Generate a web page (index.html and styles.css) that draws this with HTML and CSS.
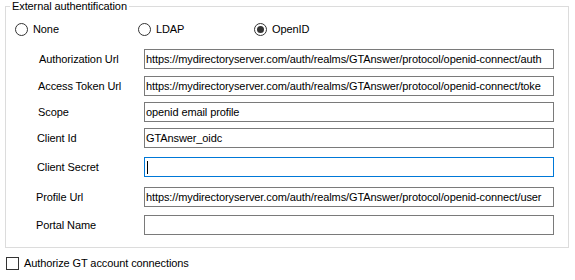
FILE: index.html
```html
<!DOCTYPE html>
<html>
<head>
<meta charset="utf-8">
<title>External authentification</title>
<link rel="stylesheet" href="styles.css">
</head>
<body>
<fieldset class="group">
  <legend class="group-title">External authentification</legend>
  <div class="radios">
    <label class="radio-opt"><span class="radio"></span><span>None</span></label>
    <label class="radio-opt"><span class="radio"></span><span>LDAP</span></label>
    <label class="radio-opt"><span class="radio radio--checked"></span><span>OpenID</span></label>
  </div>
  <div class="fields">
    <div class="field field--first">
      <span class="field-label lbl-39">Authorization Url</span>
      <div class="textbox">https://mydirectoryserver.com/auth/realms/GTAnswer/protocol/openid-connect/auth</div>
    </div>
    <div class="field sp-7">
      <span class="field-label lbl-38">Access Token Url</span>
      <div class="textbox">https://mydirectoryserver.com/auth/realms/GTAnswer/protocol/openid-connect/toke</div>
    </div>
    <div class="field sp-6">
      <span class="field-label lbl-38">Scope</span>
      <div class="textbox">openid email profile</div>
    </div>
    <div class="field sp-6">
      <span class="field-label lbl-37">Client Id</span>
      <div class="textbox">GTAnswer_oidc</div>
    </div>
    <div class="field sp-9">
      <span class="field-label lbl-37">Client Secret</span>
      <div class="textbox textbox--focus"><span class="caret"></span></div>
    </div>
    <div class="field sp-10">
      <span class="field-label lbl-36">Profile Url</span>
      <div class="textbox">https://mydirectoryserver.com/auth/realms/GTAnswer/protocol/openid-connect/user</div>
    </div>
    <div class="field sp-8">
      <span class="field-label lbl-36">Portal Name</span>
      <div class="textbox"></div>
    </div>
  </div>
</fieldset>
<label class="check-row"><span class="checkbox"></span><span>Authorize GT account connections</span></label>
</body>
</html>
```

FILE: styles.css
```css
html, body {
  margin: 0;
  padding: 0;
  background: #ffffff;
}

body {
  font-family: "Liberation Sans", Arial, sans-serif;
  font-size: 11px;
  line-height: 13px;
  color: #000000;
  letter-spacing: -0.1px;
  width: 575px;
  height: 280px;
  overflow: hidden;
}

.group {
  margin: 0 0 0 5px;
  padding: 0 0 12px 0;
  width: 564px;
  min-width: 0;
  box-sizing: border-box;
  border: 1px solid #dcdcdc;
}

.group-title {
  margin-left: 4px;
  padding: 0 2px;
  line-height: 13px;
}

.radios {
  display: grid;
  grid-template-columns: 123px 116px auto;
  padding: 8px 0 0 9px;
}

.radio-opt {
  display: flex;
  align-items: center;
  height: 16px;
  gap: 5px;
}

.radio {
  width: 13px;
  height: 13px;
  box-sizing: border-box;
  border: 1px solid #333333;
  border-radius: 50%;
  display: flex;
  align-items: center;
  justify-content: center;
  flex: none;
}

.radio--checked::after {
  content: "";
  width: 7px;
  height: 7px;
  border-radius: 50%;
  background: #333333;
}

.fields {
  margin-top: 12px;
  display: flex;
  flex-direction: column;
}

.field {
  display: flex;
  align-items: center;
  height: 20px;
}

.sp-6 { margin-top: 6px; }
.sp-7 { margin-top: 7px; }
.sp-8 { margin-top: 8px; }
.sp-9 { margin-top: 9px; }
.sp-10 { margin-top: 10px; }

.field-label {
  flex: none;
  box-sizing: border-box;
  width: 138px;
  white-space: nowrap;
}

.lbl-36 { padding-left: 30px; }
.lbl-37 { padding-left: 31px; }
.lbl-38 { padding-left: 32px; }
.lbl-39 { padding-left: 33px; }

.textbox {
  box-sizing: border-box;
  width: 410px;
  height: 20px;
  border: 1px solid #7a7a7a;
  padding: 0 1px;
  line-height: 18px;
  white-space: nowrap;
  overflow: hidden;
  display: flex;
  align-items: center;
}

.textbox--focus {
  border-color: #0078d7;
}

.caret {
  display: block;
  width: 1px;
  height: 13px;
  margin-left: 1px;
  background: #000000;
}

.check-row {
  display: flex;
  align-items: center;
  gap: 5px;
  height: 16px;
  margin: 7px 0 0 6px;
}

.checkbox {
  width: 13px;
  height: 13px;
  box-sizing: border-box;
  border: 1px solid #333333;
  flex: none;
}
```
